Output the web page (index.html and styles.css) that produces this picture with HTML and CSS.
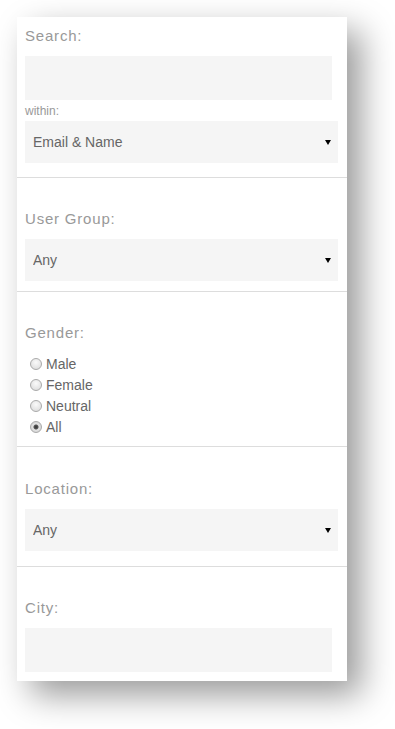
FILE: index.html
```html
<!DOCTYPE html>
<html lang="en">
<head>
    <meta charset="UTF-8">
    <meta name="viewport" content="width=device-width, initial-scale=1.0">
    <title>Member Filter</title>
    <link rel="stylesheet" href="styles.css">
</head>
<body>
    <!-- Filter panel -->
    <form class="panel">
        <div class="section section-search">
            <label class="label" for="search">Search:</label>
            <input class="field" type="text" id="search">
            <div class="sublabel">within:</div>
            <div class="select">
                <select>
                    <option>Email &amp; Name</option>
                    <option>Email</option>
                    <option>Name</option>
                </select>
            </div>
        </div>

        <div class="section section-group">
            <label class="label">User Group:</label>
            <div class="select">
                <select>
                    <option>Any</option>
                </select>
            </div>
        </div>

        <div class="section section-gender">
            <label class="label">Gender:</label>
            <div class="radios">
                <label class="radio"><input type="radio" name="gender"> Male</label>
                <label class="radio"><input type="radio" name="gender"> Female</label>
                <label class="radio"><input type="radio" name="gender"> Neutral</label>
                <label class="radio"><input type="radio" name="gender" checked> All</label>
            </div>
        </div>

        <div class="section section-location">
            <label class="label">Location:</label>
            <div class="select">
                <select>
                    <option>Any</option>
                </select>
            </div>
        </div>

        <div class="section section-city">
            <label class="label" for="city">City:</label>
            <input class="field" type="text" id="city">
        </div>
    </form>
</body>
</html>
```

FILE: styles.css
```css
/* General Styles */
html, body {
    min-height: 100%;
}
body {
    margin: 0;
    padding: 0 0 48px;
    background-color: #fff;
    font-family: "Liberation Sans", Arial, sans-serif;
}

/* Panel */
.panel {
    width: 330px;
    margin: 17px 0 0 17px;
    background-color: #fff;
    box-shadow: 14px 14px 32px rgba(0, 0, 0, 0.4);
}
.section {
    padding: 31px 9px 10px 8px;
    border-bottom: 1px solid #ddd;
}
.section-search {
    padding-top: 9px;
    padding-bottom: 14px;
}
.section-gender {
    padding-bottom: 8px;
}
.section-location {
    padding-top: 32px;
    padding-bottom: 15px;
}
.section-city {
    padding-bottom: 9px;
    border-bottom: none;
}

.label {
    display: block;
    font-size: 15px;
    line-height: 20px;
    letter-spacing: 0.8px;
    color: #999;
    margin-bottom: 10px;
}
.sublabel {
    font-size: 12px;
    line-height: 14px;
    color: #999;
    margin: 4px 0 3px;
}

/* Inputs */
.field {
    display: block;
    box-sizing: border-box;
    width: 307px;
    height: 44px;
    margin: 0;
    border: none;
    background-color: #f5f5f5;
    padding: 0 8px;
    font-family: inherit;
    font-size: 14px;
    outline: none;
}
.select {
    position: relative;
}
.select select {
    display: block;
    box-sizing: border-box;
    width: 100%;
    height: 42px;
    margin: 0;
    padding: 0 8px;
    border: none;
    border-radius: 0;
    background-color: #f5f5f5;
    color: #666;
    font-family: inherit;
    font-size: 14px;
    -webkit-appearance: none;
    appearance: none;
    outline: none;
}
.select::after {
    content: "";
    position: absolute;
    right: 7px;
    top: 19px;
    border-left: 3px solid transparent;
    border-right: 3px solid transparent;
    border-top: 5px solid #000;
    pointer-events: none;
}

/* Radios */
.radios {
    margin-top: 11px;
}
.radio {
    display: flex;
    align-items: center;
    font-size: 14px;
    line-height: 21px;
    color: #666;
}
.radio input {
    -webkit-appearance: none;
    appearance: none;
    box-sizing: border-box;
    width: 12px;
    height: 12px;
    margin: 0 4px 0 5px;
    border: 1px solid #aaa;
    border-radius: 50%;
    background: radial-gradient(circle at 50% 35%, #fafafa, #d8d8d8);
    position: relative;
    top: -1px;
}
.radio input:checked {
    background: radial-gradient(circle, #333 0, #555 2px, #e4e4e4 3px, #d0d0d0 6px);
}
```
